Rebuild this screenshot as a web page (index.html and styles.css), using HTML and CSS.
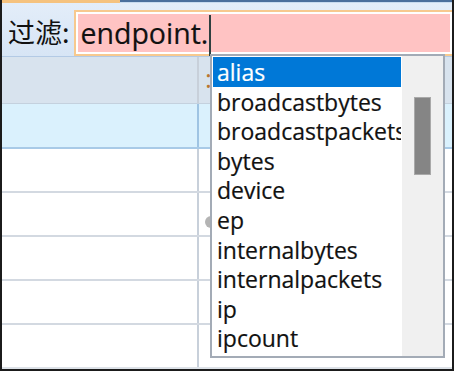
FILE: index.html
```html
<!DOCTYPE html>
<html lang="zh-CN">
<head>
  <meta charset="UTF-8">
  <meta name="viewport" content="width=device-width, initial-scale=1.0">
  <title>过滤</title>
  <link rel="stylesheet" href="styles.css">
</head>
<body>
  <div class="window">
    <div class="top-strip">
      <span class="strip-left"></span>
      <span class="strip-right"></span>
    </div>
    <div class="toolbar">
      <span class="filter-label">过滤:</span>
      <div class="filter-input">
        <span class="filter-text">endpoint.</span>
        <span class="caret"></span>
      </div>
    </div>
    <div class="grid">
      <div class="grid-row header">
        <div class="cell first"></div>
        <div class="cell"><span class="sort-mark">:</span></div>
      </div>
      <div class="grid-row current">
        <div class="cell first"></div>
        <div class="cell"></div>
      </div>
      <div class="grid-row">
        <div class="cell first"></div>
        <div class="cell"></div>
      </div>
      <div class="grid-row">
        <div class="cell first"></div>
        <div class="cell"><span class="blob"></span></div>
      </div>
      <div class="grid-row">
        <div class="cell first"></div>
        <div class="cell"></div>
      </div>
      <div class="grid-row">
        <div class="cell first"></div>
        <div class="cell"></div>
      </div>
      <div class="grid-row last">
        <div class="cell first"></div>
        <div class="cell"></div>
      </div>
    </div>

    <div class="suggest">
      <ul class="suggest-list">
        <li class="selected">alias</li>
        <li>broadcastbytes</li>
        <li>broadcastpackets</li>
        <li>bytes</li>
        <li>device</li>
        <li>ep</li>
        <li>internalbytes</li>
        <li>internalpackets</li>
        <li>ip</li>
        <li>ipcount</li>
      </ul>
      <div class="scrollbar">
        <div class="thumb"></div>
      </div>
    </div>
  </div>
</body>
</html>
```

FILE: styles.css
```css
body {
  margin: 0;
  background: #fff;
  font-family: "Open Sans", "Noto Sans", sans-serif;
}
.window {
  position: relative;
  width: 454px;
  height: 371px;
  box-sizing: border-box;
  border-left: 2px solid #1b1b1b;
  border-right: 2px solid #1b1b1b;
  border-bottom: 2px solid #1b1b1b;
  overflow: hidden;
  background: #fff;
}
.top-strip {
  display: flex;
  height: 3px;
}
.strip-left {
  width: 118px;
  background: #f5c27e;
}
.strip-right {
  flex: 1;
  background: #c8dbef;
  border-top: 2px solid #4a6f9c;
}
.toolbar {
  display: flex;
  height: 53px;
  padding-left: 6px;
  background: linear-gradient(#e3edf9, #d7e5f5);
  border-bottom: 1px solid #b3cae5;
}
.filter-label {
  margin-top: 12px;
  font-family: "Noto Sans CJK SC", sans-serif;
  font-size: 27px;
  line-height: 34px;
  color: #111;
}
.filter-input {
  flex: 1;
  display: flex;
  margin: 7px 0 0 4px;
  height: 46px;
  box-sizing: border-box;
  padding: 3px 0 2px 5px;
  background: #ffc3c3;
  border: 2px solid #f7c98f;
  border-right: none;
  box-shadow: inset 0 0 0 2px #fff;
}
.filter-text {
  font-size: 28.5px;
  line-height: 36px;
  color: #111;
  -webkit-text-stroke: 0.2px #111;
}
.caret {
  width: 2px;
  margin-left: 1px;
  margin-bottom: -4px;
  background: #2e4040;
}
.grid-row {
  display: flex;
  height: 42px;
  border-bottom: 2px solid #d3d9e1;
}
.grid-row.header {
  height: 46px;
  background: #d8e3ee;
  border-bottom: 1px solid #c4d1de;
}
.grid-row.current {
  height: 43px;
  background: #daf1fd;
  border-bottom: 2px solid #a8cae7;
}
.grid-row.last {
  border-bottom: 2px solid #dde2e8;
}
.cell {
  flex: 1;
  position: relative;
}
.cell.first {
  flex: none;
  width: 195px;
  border-right: 2px solid #c8d0da;
}
.current .cell.first {
  border-right-color: #9fc4e3;
}
.sort-mark {
  position: absolute;
  left: 6px;
  top: 4px;
  font-size: 26px;
  line-height: 34px;
  color: #b9772f;
}
.blob {
  position: absolute;
  left: 6px;
  top: 23px;
  width: 12px;
  height: 12px;
  border-radius: 50%;
  background: #b4b4b4;
}
.suggest {
  position: absolute;
  left: 208px;
  top: 54px;
  width: 235px;
  height: 304px;
  box-sizing: border-box;
  display: flex;
  background: #fff;
  border: 2px solid #a3abb6;
}
.suggest-list {
  width: 189px;
  margin: 0;
  padding: 1px 0 0 1px;
  list-style: none;
  overflow: hidden;
  box-sizing: border-box;
}
.suggest-list li {
  height: 29.6px;
  padding-left: 4px;
  font-size: 23px;
  line-height: 31px;
  color: #111;
  -webkit-text-stroke: 0.2px #111;
  white-space: nowrap;
}
.suggest-list li.selected {
  background: #0078d7;
  color: #fff;
  -webkit-text-stroke: 0.2px #fff;
}
.scrollbar {
  flex: 1;
  display: flex;
  justify-content: center;
  margin-left: 1px;
  background: #f0f0f0;
}
.thumb {
  width: 15px;
  height: 76px;
  margin-top: 41px;
  background: #858585;
  border: 1px solid #a9a9a9;
}
```
